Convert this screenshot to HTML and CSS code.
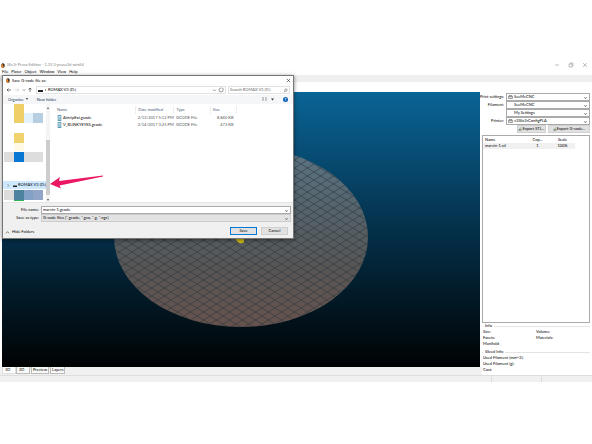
FILE: index.html
```
<!DOCTYPE html>
<html lang="en">
<head>
<meta charset="utf-8">
<title>Slic3r Prusa Edition</title>
<link rel="stylesheet" href="styles.css">
</head>
<body>
<div class="app">
  <header class="titlebar">
    <svg class="logo" viewBox="0 0 10 12"><path fill="#3b2a20" d="M1 3 5 0l4 3v7l-4 2-4-2z"/><path fill="#e8862c" d="M1 3h4v4l3 2-3 3-4-2z"/></svg>
    <span class="apptitle">Slic3r Prusa Edition - 1.33.3-prusa3d-win64</span>
    <svg class="winctl" viewBox="0 0 36 6" fill="none" stroke="#999" stroke-width=".6"><path d="M2 3h4M30 1l4 4m0-4-4 4"/><path d="M16 2h3v3h-3zM17 2V1h3v3h-1"/></svg>
  </header>
  <nav class="menu"><a href="#">File</a><a href="#">Plater</a><a href="#">Object</a><a href="#">Window</a><a href="#">View</a><a href="#">Help</a></nav>
  <div class="band"></div>
  <main class="work">
    <section class="stage">
      <svg class="scene" viewBox="0 0 478 275">
        <defs>
          <linearGradient id="sky" x1="0" y1="0" x2="0" y2="1"><stop offset="0" stop-color="#0a6496"/><stop offset=".5" stop-color="#04304a"/><stop offset="1" stop-color="#000203"/></linearGradient>
          <linearGradient id="bed" x1="0" y1="0" x2="0" y2="1"><stop offset="0" stop-color="#5b7585"/><stop offset=".35" stop-color="#55636b"/><stop offset=".65" stop-color="#565656"/><stop offset="1" stop-color="#66524c"/></linearGradient>
          <pattern id="mesh" width="13" height="8" patternUnits="userSpaceOnUse"><path d="M0 0 13 8M13 0 0 8" fill="none" stroke="#2b353b" stroke-width=".7" stroke-opacity=".85"/></pattern>
        </defs>
        <path fill="url(#sky)" d="M0 0h478v275H0z"/>
        <ellipse cx="239" cy="145" rx="127" ry="90" fill="url(#bed)"/>
        <ellipse cx="239" cy="145" rx="127" ry="90" fill="url(#mesh)"/>
        <path fill="#d3bd12" d="M231 144h11v6q-4 3-7-1z"/>
      </svg>
      <div class="tabs"><button class="tab on">3D</button><button class="tab">2D</button><button class="tab fit">Preview</button><button class="tab fit">Layers</button></div>
    </section>
    <aside class="side">
      <div class="settings">
        <label for="ps">Print settings:</label>
        <span class="combo iconed"><svg viewBox="0 0 10 8"><path d="M2 3V1h6v2M1 3h8v4H1z" fill="#ddd" stroke="#555"/></svg><select id="ps"><option>SeeMeCNC</option></select></span>
        <label for="fil">Filament:</label>
        <span class="combo iconed"><select id="fil"><option>SeeMeCNC</option></select></span>
        <span></span>
        <span class="combo iconed"><select aria-label="Filament 2"><option>My Settings</option></select></span>
        <label for="prn">Printer:</label>
        <span class="combo iconed"><svg viewBox="0 0 10 8"><path d="M2 3V1h6v2M1 3h8v4H1z" fill="#ddd" stroke="#555"/></svg><select id="prn"><option>v3Slic3rConfigPLA</option></select></span>
      </div>
      <div class="exports">
        <button><svg viewBox="0 0 10 10"><path d="M1 6h8v3H1z" fill="#777"/><path d="M3 6 7 2" stroke="#3a9d3a" stroke-width="2"/></svg>Export STL...</button>
        <button class="wide"><svg viewBox="0 0 10 10"><path d="M1 6h8v3H1z" fill="#777"/><path d="M3 6 7 2" stroke="#3a9d3a" stroke-width="2"/></svg>Export G-code...</button>
      </div>
      <div class="objects">
        <table>
          <thead><tr><th class="oname">Name</th><th>Cop...</th><th>Scale</th></tr></thead>
          <tbody><tr><td class="oname">marvin-1.stl</td><td>1</td><td>100%</td></tr></tbody>
        </table>
      </div>
      <fieldset class="info two"><legend>Info</legend><span>Size:</span><span>Volume:</span><span>Facets:</span><span>Materials:</span><span>Manifold:</span></fieldset>
      <fieldset class="info"><legend>Sliced Info</legend><span>Used Filament (mm^3):</span><span>Used Filament (g):</span><span>Cost:</span></fieldset>
    </aside>
  </main>
  <footer class="status"><span></span><span></span><span></span></footer>

  <section class="dialog" role="dialog" aria-label="Save G-code file as">
    <header class="dtitle">
      <svg class="logo" viewBox="0 0 10 12"><path fill="#3b2a20" d="M1 3 5 0l4 3v7l-4 2-4-2z"/><path fill="#e8862c" d="M1 3h4v4l3 2-3 3-4-2z"/></svg>
      <span>Save G-code file as:</span>
      <button class="x" aria-label="Close"><svg viewBox="0 0 6 6"><path d="m1 1 4 4m0-4L1 5" stroke="#222" stroke-width=".7"/></svg></button>
    </header>
    <div class="address">
      <svg class="arrows" viewBox="0 0 28 6" fill="none" stroke="#444" stroke-width=".7"><path d="M5 3H1m1.500-1.500L1 3l1.500 1.500M24 5V1m-1.500 1.500L24 1l1.500 1.500"/><path stroke="#ccc" d="M9 3h4m-1.500-1.500L13 3l-1.500 1.500"/><path d="m17 2.500 1 1 1-1"/></svg>
      <div class="path"><svg class="drive" viewBox="0 0 10 6"><path d="M0 3h5v2H0z" fill="#222"/><path d="m7 2 1 1-1 1" fill="none" stroke="#555" stroke-width=".6"/></svg><span>ROMAX V3 (D:)</span><svg class="refresh" viewBox="0 0 12 6" fill="none" stroke="#555" stroke-width=".6"><path d="m1 2.500 1.500 1.500L4 2.500M9.500 1a2 2 0 1 0 1.500 1.500V.8"/></svg></div>
      <div class="search"><input aria-label="Search" placeholder="Search ROMAX V3 (D:)"><svg viewBox="0 0 6 6" fill="none" stroke="#555" stroke-width=".6"><circle cx="3.500" cy="2.500" r="1.500"/><path d="M2.500 3.500 1 5"/></svg></div>
    </div>
    <div class="tools">
      <button>Organize <i class="tri"></i></button><button>New folder</button>
      <span class="view"><svg viewBox="0 0 12 5"><path d="M0 .5h2v1H0zm0 2h2v1H0zM3 .5h2v1H3zm0 2h2v1H3z" fill="#999"/><path d="M9 1.500h3L10.500 3.500z" fill="#333"/></svg></span>
      <button class="help" aria-label="Help">?</button>
    </div>
    <div class="browser">
      <div class="tree">
        <svg class="blocks" viewBox="0 0 43 77"><path fill="#efcf68" d="M11 0h10v19H11z"/><path fill="#e2f2fc" d="M21 9h9v10h-9z"/><path fill="#b6cee0" d="M30 9h10v10H30z"/><path fill="#f0d36e" d="M11 29h10v10H11z"/><path fill="#fff9e6" d="M11 39h10v8H11z"/><path fill="#ddd" d="M1 48h10v10H1zM21 48h19v10H21z"/><path fill="#0877d4" d="M11 48h10v10H11z"/></svg>
        <button class="node"><svg viewBox="0 0 14 5"><path d="m4.500 1 1.300 1.500L4.500 4" fill="none" stroke="#555" stroke-width=".5"/><path d="M10 2.500h4V4h-4z" fill="#222"/></svg>ROMAX V3 (D:)</button>
        <svg class="blocks" viewBox="0 0 43 13"><path fill="#dcdcdc" d="M1 1h10v10H1z"/><path fill="#4d839e" d="M11 1h10v10H11z"/><path fill="#83a0c7" d="M21 1h9v10h-9z"/><path fill="#91a5c8" d="M30 1h10v10H30z"/><path fill="#2fb457" d="M11 11h10v1H11z"/></svg>
      </div>
      <div class="scroll"><i class="up"></i><div class="thumb"></div><i class="down"></i></div>
      <table class="files">
        <colgroup><col class="c1"><col class="c2"><col class="c3"><col class="c4"></colgroup>
        <thead><tr><th>Name</th><th>Date modified</th><th>Type</th><th>Size</th></tr></thead>
        <tbody>
          <tr><td><svg viewBox="0 0 8 10"><path d="M1 0h6v10H1z" fill="#5c9bb5"/><path d="M2 2h4v2H2zm0 3h4v1H2zm0 2h4v1H2z" fill="#e8f5fa"/></svg>AirtripExt.gcode</td><td>2/13/2017 5:12 PM</td><td>GCODE File</td><td>8,840 KB</td></tr>
          <tr><td><svg viewBox="0 0 8 10"><path d="M1 0h6v10H1z" fill="#5c9bb5"/><path d="M2 2h4v2H2zm0 3h4v1H2zm0 2h4v1H2z" fill="#e8f5fa"/></svg>V_BLINKYEYES.gcode</td><td>2/14/2017 3:25 PM</td><td>GCODE File</td><td>473 KB</td></tr>
        </tbody>
      </table>
    </div>
    <div class="saveform">
      <label for="fn">File name:</label>
      <span class="combo"><input id="fn" value="marvin-1.gcode"></span>
      <label for="ft">Save as type:</label>
      <span class="combo grey"><select id="ft"><option>G-code files (*.gcode, *.gco, *.g, *.ngc)</option></select></span>
    </div>
    <footer class="actions">
      <button class="hide"><svg viewBox="0 0 6 6"><path d="m1 4 2-2 2 2" fill="none" stroke="#333" stroke-width=".7"/></svg>Hide Folders</button>
      <button class="btn primary">Save</button><button class="btn">Cancel</button>
    </footer>
    <svg class="pointer" viewBox="0 0 54 14"><path fill="#eb1763" d="M0 9 10 2 9 6 53 0.500v1L9.500 10.500 11 13.500z"/></svg>
  </section>
</div>
</body>
</html>
```
FILE: styles.css
```
* { box-sizing: border-box; }
body {
  margin: 0;
  padding-top: 61px;
  background: #fff;
  color: #000;
  font: 4px/6px Lato, "Open Sans", sans-serif;
}
button, input, select {
  font: inherit;
  color: inherit;
  margin: 0;
  padding: 0;
  border: 0;
  background: none;
  border-radius: 0;
  appearance: none;
  outline: 0;
}
svg { display: block; flex: none; }
a { color: inherit; text-decoration: none; }
table { border-collapse: collapse; table-layout: fixed; }
th, td { padding: 0; font-weight: 400; text-align: left; white-space: nowrap; }

.app { position: relative; }
.titlebar { display: flex; align-items: center; height: 8px; padding: 0 3px 0 1px; color: #888; }
.logo { width: 4px; height: 5px; margin-right: 2px; }
.winctl { width: 36px; height: 6px; margin-left: auto; }
.menu { display: flex; gap: 3px; height: 6px; padding-left: 2px; }
.band { height: 7px; margin-bottom: 10px; background: #efefef; }

.work { display: grid; grid-template-columns: 1fr 110px; gap: 2px; padding-left: 2px; }
.scene { width: 100%; }
.tabs { display: flex; height: 8px; background: #f0f0f0; margin-left: -2px; margin-right: -2px; padding-left: 2px; }
.tab { min-width: 14px; height: 7px; padding: 0 2px; text-align: left; border: 1px solid #bbb; border-top: 0; background: #f8f8f8; }
.tab.fit { min-width: 0; padding: 0 1px; margin-left: 1px; }
.tab.on { border-color: #ddd; background: #fff; }

.side { display: flex; flex-direction: column; padding-right: 2px; }
.settings { display: grid; grid-template-columns: 22px 1fr; gap: 0 2px; padding-top: 1px; }
.settings label { text-align: right; line-height: 8px; white-space: nowrap; justify-self: end; }
.combo { position: relative; display: flex; align-items: center; height: 8px; border: 1px solid #aaa; background: #fff; }
.combo select, .combo input { width: 100%; height: 6px; line-height: 6px; }
.combo.iconed { padding-left: 7px; }
.combo svg { position: absolute; left: 1px; width: 5px; height: 4px; }
.combo::after { content: ""; position: absolute; right: 2px; top: 2px; width: 2px; height: 2px; border: solid #777; border-width: 0 1px 1px 0; transform: rotate(45deg) scale(.7); }
.exports { display: flex; justify-content: flex-end; gap: 2px; margin-bottom: 2px; }
.exports button { display: flex; align-items: center; justify-content: center; width: 29px; height: 8px; background: #e1e1e1; border: 1px solid #d0d0d0; white-space: nowrap; }
.exports button.wide { width: 42px; }
.exports svg { width: 4px; height: 4px; }
.objects { flex: 1; border: 1px solid #aaa; padding-top: 1px; background: #fff; }
.objects table { width: 92px; }
.objects th, .objects td { text-align: center; }
.objects .oname { width: 42px; text-align: left; padding-left: 2px; }
.objects tbody tr { background: #f0f0f0; }
.info { display: grid; grid-template-columns: 1fr; margin: 0; padding: 0 0 2px 1px; border: 1px solid #e4e4e4; border-width: 1px 0 0; min-width: 0; line-height: 6px; }
.info.two { grid-template-columns: 53px 1fr; }
.info legend { padding: 0 2px; }
.status { display: grid; grid-template-columns: 1fr 50px 51px; height: 7px; background: #f0f0f0; border-top: 1px solid #ddd; }
.status span + span { border-left: 1px solid #ddd; }

.dialog {
  position: absolute;
  left: 2px;
  top: 14px;
  width: 292px;
  border: 1px solid #777;
  background: #fff;
  box-shadow: 0 1px 4px rgba(0, 0, 0, .5);
}
.dtitle { display: flex; align-items: center; height: 9px; padding: 0 2px 0 3px; }
.x { margin-left: auto; }
.x svg { width: 5px; height: 5px; }
.address { display: flex; align-items: center; height: 10px; padding: 0 3px; gap: 2px; }
.arrows { width: 28px; height: 6px; }
.path, .search { display: flex; align-items: center; height: 8px; border: 1px solid #e2e2e2; }
.path { flex: 1; padding: 0 1px; }
.drive { width: 10px; height: 6px; }
.refresh { width: 12px; height: 6px; margin-left: auto; }
.search { width: 62px; padding: 0 1px; }
.search input { flex: 1; min-width: 0; height: 6px; }
.search input::placeholder { color: #666; opacity: 1; }
.search svg { width: 5px; height: 5px; }
.tools { display: flex; align-items: center; gap: 9px; height: 9px; padding: 0 5px; background: #f5f6f7; color: #1e395b; }
.tri { display: inline-block; margin-left: 1px; border: solid transparent; border-width: 2px 1px 0; border-top-color: #1e395b; vertical-align: 1px; }
.view { margin-left: auto; }
.view svg { width: 12px; height: 5px; }
.help { width: 5px; height: 5px; border-radius: 50%; background: #0a62b5; color: #fff; line-height: 5px; font-weight: 700; text-align: center; }
.browser { display: flex; align-items: flex-start; }
.tree { width: 43px; }
.blocks { width: 43px; }
.node { display: flex; align-items: center; width: 43px; height: 8px; background: #cde8ff; white-space: nowrap; }
.node svg { width: 14px; height: 5px; margin-right: 1px; }
.scroll { display: flex; flex-direction: column; align-items: center; align-self: stretch; width: 4px; padding: 3px 0 1px; background: #f4f4f4; }
.thumb { width: 4px; height: 55px; margin: auto 0 4px; background: #cdcdcd; }
.up, .down { border: solid transparent; border-width: 0 1px 2px; border-bottom-color: #555; }
.down { border-width: 2px 1px 0; border-top-color: #555; }
.files { width: 182px; margin: 2px 0 0 5px; }
.files .c1 { width: 80px; }
.files .c2 { width: 38px; }
.files .c3 { width: 36px; }
.files .c4 { width: 26px; }
.files th { height: 8px; padding-left: 2px; color: #4c607a; border-right: 1px solid #eee; }
.files td { height: 7px; padding-left: 2px; color: #555; }
.files td:first-child { display: flex; align-items: center; gap: 1px; color: #000; }
.files td:last-child { text-align: right; padding-right: 3px; }
.files svg { width: 5px; height: 6px; }
.saveform { display: grid; grid-template-columns: 36px 1fr; gap: 0 2px; padding: 3px 2px 0 0; background: #f0f0f0; border-top: 1px solid #e6e6e6; }
.saveform label { text-align: right; line-height: 7px; }
.saveform .combo { padding-left: 1px; }
.combo.grey { background: #e3e3e3; border-color: #ccc; }
.actions { display: flex; align-items: center; gap: 4px; padding: 4px 5px 3px 2px; background: #f0f0f0; }
.hide { display: flex; align-items: center; gap: 2px; margin-right: auto; padding-top: 3px; }
.hide svg { width: 5px; height: 5px; }
.btn { width: 27px; height: 8px; background: #e1e1e1; border: 1px solid #cfcfcf; line-height: 6px; }
.btn.primary { border-color: #0078d7; }
.pointer { position: absolute; left: 47px; top: 99px; width: 54px; height: 14px; }
```
